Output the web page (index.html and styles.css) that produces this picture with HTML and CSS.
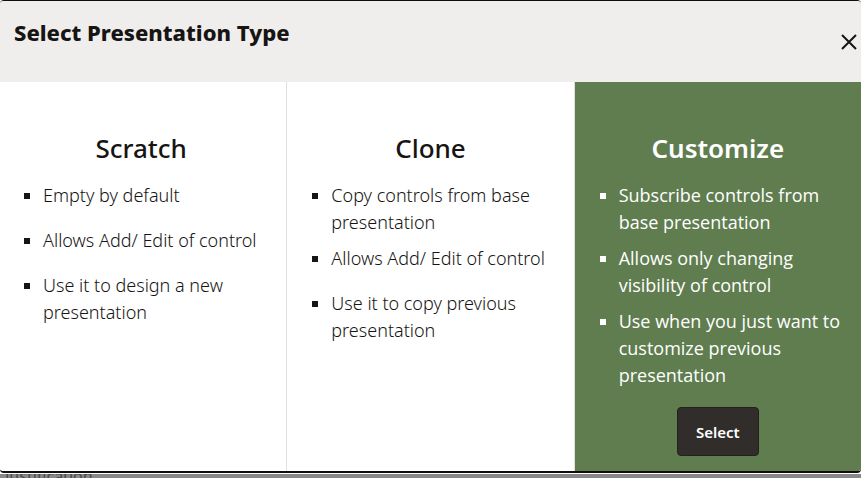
FILE: index.html
```html
<!DOCTYPE html>
<html lang="en">
<head>
<meta charset="utf-8">
<title>Select Presentation Type</title>
<link rel="stylesheet" href="styles.css">
</head>
<body>
<section class="dialog" role="dialog" aria-labelledby="dialog-title">
  <header class="dialog-header">
    <h1 class="dialog-title" id="dialog-title">Select Presentation Type</h1>
    <button class="close" type="button" aria-label="Close">
      <svg width="16" height="16" viewBox="0 0 16 16" fill="none" stroke="currentColor" stroke-width="2"><path d="M1 1L15 15M15 1L1 15"/></svg>
    </button>
  </header>
  <div class="options">
    <article class="option">
      <h2 class="option-title">Scratch</h2>
      <ul class="features">
        <li>Empty by default</li>
        <li>Allows Add/ Edit of control</li>
        <li>Use it to design a new presentation</li>
      </ul>
    </article>
    <article class="option">
      <h2 class="option-title">Clone</h2>
      <ul class="features">
        <li>Copy controls from base presentation</li>
        <li>Allows Add/ Edit of control</li>
        <li>Use it to copy previous presentation</li>
      </ul>
    </article>
    <article class="option selected">
      <h2 class="option-title">Customize</h2>
      <ul class="features">
        <li>Subscribe controls from base presentation</li>
        <li>Allows only changing visibility of control</li>
        <li>Use when you just want to customize previous presentation</li>
      </ul>
      <button class="select" type="button">Select</button>
    </article>
  </div>
</section>
<div class="backdrop"><span>Justification</span></div>
</body>
</html>
```
FILE: styles.css
```css
* {
  box-sizing: border-box;
}

body {
  margin: 0;
  height: 100vh;
  display: flex;
  flex-direction: column;
  overflow: hidden;
  background: #fff;
  color: #161513;
  font-family: "Noto Sans", "Open Sans", sans-serif;
}

.dialog {
  flex: 1;
  display: flex;
  flex-direction: column;
  min-height: 0;
  margin-bottom: 1px;
  border-top: 1px solid #100d0d;
  border-bottom: 2px solid #100d0d;
  border-radius: 4px;
  overflow: hidden;
}

.dialog-header {
  display: flex;
  justify-content: space-between;
  align-items: center;
  padding: 0 4px 0 14px;
  height: 81px;
  background: #f0eeec;
}

.dialog-title {
  margin: 0 0 20px;
  font-size: 22px;
  line-height: 28px;
  font-weight: 800;
}

.close {
  display: flex;
  padding: 0;
  border: 0;
  background: none;
  color: #161513;
}

.options {
  flex: 1;
  display: flex;
}

.option {
  flex: 1 1 0;
  box-sizing: content-box;
  display: flex;
  flex-direction: column;
  border-right: 1px solid #e0e0e0;
}

.option-title {
  margin: 48px 0 16px;
  padding-right: 4px;
  text-align: center;
  font-size: 26px;
  line-height: 36px;
  font-weight: 500;
}

.option + .option .option-title {
  padding-right: 0;
}

.features {
  margin: 0;
  padding: 0 16px 0 24px;
  list-style: none;
  font-size: 18px;
  line-height: 27px;
  font-weight: 300;
}

.option + .option .features {
  padding-left: 25px;
}

.features li {
  position: relative;
  min-height: 36px;
  margin-bottom: 9px;
  padding-left: 19px;
}

.features li::before {
  content: "";
  position: absolute;
  left: 0;
  top: 11px;
  width: 6px;
  height: 6px;
  background: currentColor;
}

.selected {
  border-right: 0;
  background: #5f7d4f;
  color: #fff;
}

.selected .option-title {
  font-weight: 600;
}

.selected .features {
  font-family: "Open Sans", "Noto Sans", sans-serif;
  font-weight: 400;
}

.select {
  align-self: center;
  margin-top: 9px;
  padding: 0 18px;
  height: 49px;
  border: 1px solid #24201e;
  border-radius: 4px;
  background: #312d2a;
  color: #fff;
  font: 600 15px/24px "Noto Sans", "Open Sans", sans-serif;
}

.backdrop {
  display: flex;
  align-items: center;
  height: 4px;
  padding-left: 5px;
  overflow: hidden;
  background: #888;
  color: #4b4a49;
  font-size: 16px;
}
```
